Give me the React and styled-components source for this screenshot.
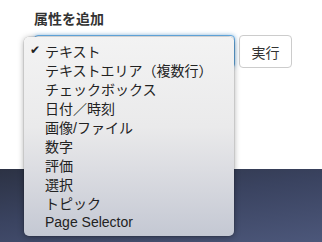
import React from "react";
import styled, { createGlobalStyle } from "styled-components";

const GlobalStyle = createGlobalStyle`
    html, body {
        margin: 0;
        padding: 0;
        width: 322px;
        height: 242px;
        overflow: hidden;
        background: #fff;
    }
    body {
        font-family: "Liberation Sans", "Noto Sans CJK JP", sans-serif;
        color: #333;
    }
`;

const Page = styled.div`
    display: flex;
    flex-flow: column nowrap;
    width: 322px;
    height: 242px;
`;

const Panel = styled.div`
    height: 169px;
    background: #fff;
    padding: 10px 0 0 34px;
    box-sizing: border-box;
`;

const Backdrop = styled.div`
    flex: 1;
    background: linear-gradient(172deg, #2c3244 0%, #3a4360 45%, #4c577a 100%);
`;

const Label = styled.div`
    font-size: 14px;
    font-weight: 700;
    color: #333;
    line-height: 18px;
    margin-bottom: 7px;
`;

const Row = styled.div`
    display: flex;
    flex-flow: row nowrap;
    gap: 4px;
    position: relative;
`;

const SelectBox = styled.div`
    width: 201px;
    height: 33px;
    box-sizing: border-box;
    border: 1px solid #66afe9;
    border-radius: 4px;
    box-shadow: 0 0 4px rgba(102, 175, 233, 0.6);
    background: #fff;
`;

const Button = styled.button`
    width: 53px;
    height: 33px;
    box-sizing: border-box;
    border: 1px solid #ccc;
    border-radius: 4px;
    background: #fff;
    color: #333;
    font-family: "Noto Sans CJK JP", sans-serif;
    font-size: 14px;
    padding: 0;
`;

const Menu = styled.ul`
    position: absolute;
    left: -10px;
    top: 2px;
    width: 210px;
    margin: 0;
    padding: 4px 0 5px;
    list-style: none;
    border-radius: 5px;
    background: linear-gradient(180deg, #f3f3f3 0%, #eaeaeb 45%, #dcdde2 66%, #c4c8d3 100%);
    box-shadow: 0 1px 6px rgba(0, 0, 0, 0.35), 0 0 0 0.5px rgba(0, 0, 0, 0.15);
`;

const Item = styled.li`
    display: flex;
    align-items: center;
    height: 19px;
    padding-left: 21px;
    position: relative;
    font-family: "Liberation Sans", "Noto Sans CJK JP", sans-serif;
    font-size: 14px;
    color: #222;
    white-space: nowrap;
`;

const Check = styled.span`
    position: absolute;
    left: 6px;
    top: 0;
    font-family: "DejaVu Sans", sans-serif;
    font-size: 12px;
    line-height: 19px;
    color: #222;
`;

const options = [
    "テキスト",
    "テキストエリア（複数行）",
    "チェックボックス",
    "日付／時刻",
    "画像/ファイル",
    "数字",
    "評価",
    "選択",
    "トピック",
    "Page Selector"
];

const App = () => {
    return (
        <Page>
            <GlobalStyle />
            <Panel>
                <Label>属性を追加</Label>
                <Row>
                    <SelectBox />
                    <Button>実行</Button>
                    <Menu>
                        {options.map((o, i) => (
                            <Item key={o}>
                                {i === 0 && <Check>✔</Check>}
                                {o}
                            </Item>
                        ))}
                    </Menu>
                </Row>
            </Panel>
            <Backdrop />
        </Page>
    );
};

export default App;
